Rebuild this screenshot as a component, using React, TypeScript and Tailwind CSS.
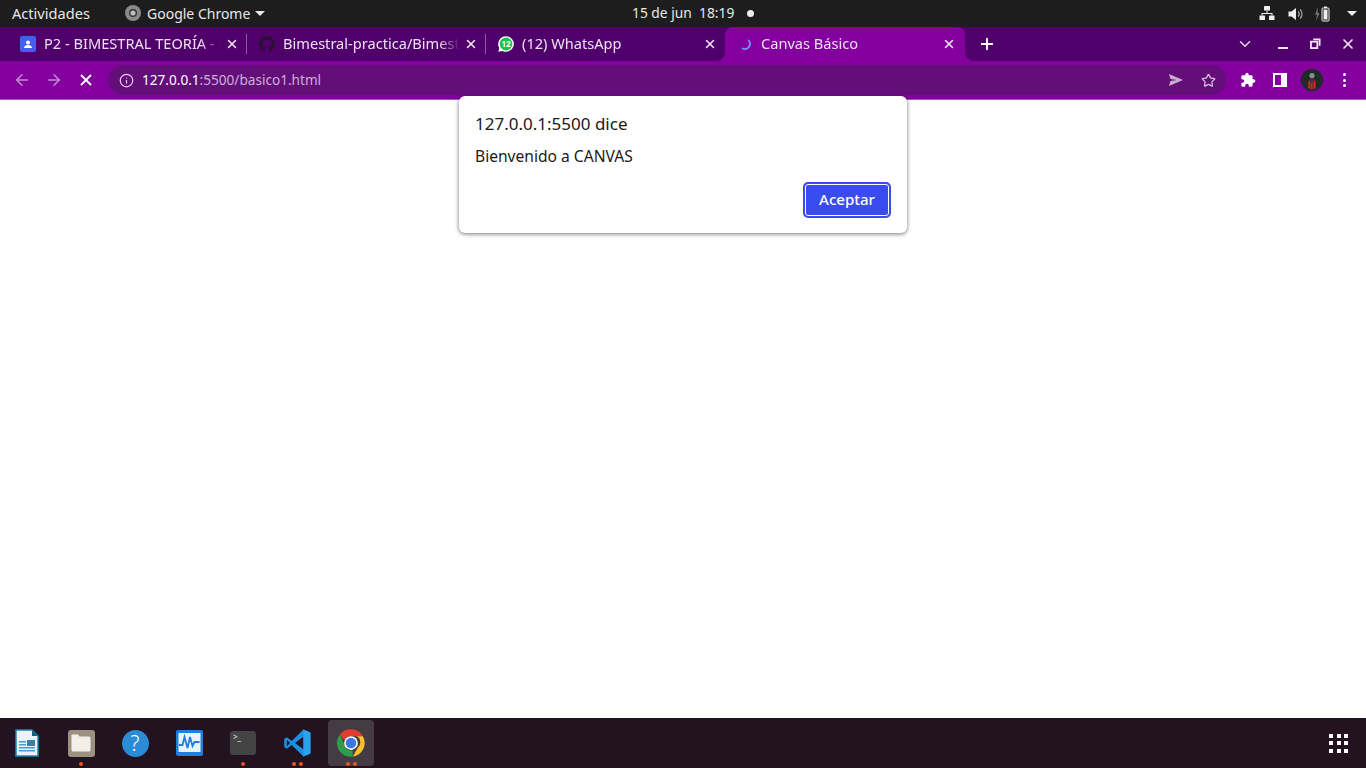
import React from 'react';
import { ArrowLeft, ArrowRight, ChevronDown, Info, Plus, Star, X } from 'lucide-react';
import { FaGithub } from 'react-icons/fa';

const ChromeLogo = ({ size }: { size: number }) => (
  <svg width={size} height={size} viewBox="0 0 48 48">
    <path d="M24 2a22 22 0 0 1 19 11H24a11 11 0 0 0-10.4 7.4L6.2 10.2A22 22 0 0 1 24 2z" fill="#e33b2e" />
    <path d="M43 13a22 22 0 0 1-16.3 32.8L35 31a11 11 0 0 0-1.8-18z" fill="#fbc02d" />
    <path d="M6.2 10.2 15.5 31a11 11 0 0 0 11.2 4.9l-0.2 9.9A22 22 0 0 1 6.2 10.2z" fill="#2e9e48" />
    <circle cx="24" cy="24" r="11" fill="#fff" />
    <circle cx="24" cy="24" r="8.5" fill="#3b78e7" />
  </svg>
);

const TabIcon = ({ kind }: { kind: string }) => {
  if (kind === 'classroom') {
    return (
      <svg width="16" height="16" viewBox="0 0 16 16">
        <rect width="16" height="16" rx="2" fill="#4361ee" />
        <circle cx="8" cy="6.5" r="2" fill="#fff" />
        <path d="M4 12c0-2 2-3 4-3s4 1 4 3z" fill="#fff" />
      </svg>
    );
  }
  if (kind === 'github') return <FaGithub size={16} color="#2a1030" />;
  if (kind === 'whatsapp') {
    return (
      <svg width="16" height="16" viewBox="0 0 16 16">
        <path d="M8 0.2a7.8 7.8 0 1 1-3.6 14.7L0.3 15.8l1-3.8A7.8 7.8 0 0 1 8 0.2z" fill="#fff" />
        <circle cx="8" cy="8" r="6.4" fill="#18c44f" />
        <text x="8" y="10.8" textAnchor="middle" fontSize="8" fontWeight="700" fill="#fff" fontFamily="'Noto Sans', sans-serif">12</text>
      </svg>
    );
  }
  return (
    <svg width="16" height="16" viewBox="0 0 16 16" fill="none">
      <path d="M11.8 4.5a5.2 5.2 0 0 1-6.2 8" stroke="#7c8cf5" strokeWidth="1.8" strokeLinecap="round" />
    </svg>
  );
};

const Tab = ({ title, icon, active, divider }: { title: string; icon: string; active?: boolean; divider?: boolean }) => (
  <div
    className={`relative flex h-[34px] shrink-0 items-center pl-[12px] ${
      active ? 'w-[240px] rounded-t-[8px] bg-[#83009f] pr-[9px]' : 'w-[239px] pr-[8px]'
    }`}
  >
    <TabIcon kind={icon} />
    <span className="ml-[8px] mb-[1px] min-w-0 flex-1 overflow-hidden whitespace-nowrap text-[14.6px] text-[#f0e2f4] [mask-image:linear-gradient(to_right,#000_88%,transparent)]">
      {title}
    </span>
    <X size={14} strokeWidth={2.6} className="ml-[4px] shrink-0 text-[#f2e6f5]" />
    {divider && <div className="absolute right-0 top-[7px] h-[20px] w-px bg-[#8f5a9f]" />}
    {active && (
      <>
        <div className="absolute bottom-0 left-[-8px] h-[8px] w-[8px] bg-[radial-gradient(circle_at_0_0,#50006a_7.5px,#83009f_8px)]" />
        <div className="absolute bottom-0 right-[-8px] h-[8px] w-[8px] bg-[radial-gradient(circle_at_100%_0,#50006a_7.5px,#83009f_8px)]" />
      </>
    )}
  </div>
);

const DockItem = ({ dots = 0, active, children }: { dots?: number; active?: boolean; children: React.ReactNode }) => (
  <div className="relative flex h-[50px] w-[54px] items-center justify-center">
    <div className={`flex h-[46px] w-[46px] items-center justify-center rounded-[4px] ${active ? 'bg-[#453c43]' : ''}`}>
      {children}
    </div>
    {dots > 0 && (
      <div className="absolute bottom-[2px] flex gap-[3px]">
        {Array.from({ length: dots }).map((_, i) => (
          <span key={i} className="h-[4px] w-[4px] rounded-full bg-[#e95420]" />
        ))}
      </div>
    )}
  </div>
);

export default function App() {
  return (
    <div className="flex h-[768px] w-[1366px] flex-col overflow-hidden bg-white font-['Noto_Sans',sans-serif]">
      {/* gnome top bar */}
      <div className="flex h-[27px] shrink-0 items-center bg-[#1d1d1d] text-[14px] text-[#e8e8e8]">
        <div className="flex w-[632px] items-center pl-[12px]">
          <span className="w-[113px] text-[14.6px]">Actividades</span>
          <svg width="16" height="16" viewBox="0 0 16 16">
            <circle cx="8" cy="8" r="8" fill="#8a8a8a" />
            <circle cx="8" cy="8" r="4" fill="#333" />
            <circle cx="8" cy="8" r="2.6" fill="#bdbdbd" />
          </svg>
          <span className="ml-[6px]">Google Chrome</span>
          <span className="ml-[5px] h-0 w-0 border-x-[5px] border-t-[5px] border-x-transparent border-t-[#e8e8e8]" />
        </div>
        <span className="text-[13.8px]">15 de jun&nbsp;&nbsp;18:19</span>
        <span className="ml-[13px] h-[7px] w-[7px] rounded-full bg-[#eee]" />
        <div className="ml-auto flex items-center pr-[9px]">
          <svg width="16" height="15" viewBox="0 0 16 15" fill="#eee">
            <rect x="5" y="0" width="6" height="4.5" rx="0.5" />
            <rect x="0.5" y="9.5" width="5.5" height="4.5" rx="0.5" />
            <rect x="10" y="9.5" width="5.5" height="4.5" rx="0.5" />
            <path d="M7.5 4.5h1V7H13.5v2.5h-1V8h-9v1.5h-1V7h5z" />
          </svg>
          <svg width="16" height="14" viewBox="0 0 16 14" className="ml-[13px]" fill="none">
            <path d="M0.5 4.5h3L8 1v12L3.5 9.5h-3z" fill="#eee" />
            <path d="M10 4.5a3.2 3.2 0 0 1 0 5M12 2.5a6 6 0 0 1 0 9" stroke="#aaa" strokeWidth="1.2" />
          </svg>
          <svg width="20" height="16" viewBox="0 0 20 16" className="ml-[10px]" fill="none">
            <path d="M4 1 1 8.5h2L2 15l3.5-8h-2z" fill="#777" />
            <rect x="8" y="2" width="7" height="13" rx="1" stroke="#eee" strokeWidth="1" />
            <rect x="9.5" y="3.5" width="4" height="10" fill="#eee" />
            <rect x="10" y="0.5" width="3" height="1.5" fill="#eee" />
          </svg>
          <span className="ml-[13px] h-0 w-0 border-x-[5px] border-t-[5px] border-x-transparent border-t-[#eee]" />
        </div>
      </div>

      {/* tab strip */}
      <div className="flex h-[34px] shrink-0 items-center bg-[#50006a] pl-[8px] text-[#f2e6f5]">
        <Tab title="P2 - BIMESTRAL TEORÍA - Parte" icon="classroom" divider />
        <Tab title="Bimestral-practica/Bimestral" icon="github" divider />
        <Tab title="(12) WhatsApp" icon="whatsapp" />
        <Tab title="Canvas Básico" icon="spinner" active />
        <Plus size={18} strokeWidth={2.5} className="ml-[13px] text-white" />
        <ChevronDown size={18} strokeWidth={2} className="ml-[240px] text-[#e6d5ea]" />
        <div className="ml-[24px] mt-[8px] h-[2px] w-[10px] bg-[#f0e4f3]" />
        <svg width="11" height="11" viewBox="0 0 12 12" className="ml-[22px] mb-[2px]" fill="none">
          <path d="M3.5 1.5h7v7" stroke="#f0e4f3" strokeWidth="2" />
          <rect x="1" y="4" width="7" height="7" stroke="#f0e4f3" strokeWidth="2" />
        </svg>
        <X size={16} strokeWidth={2.6} className="ml-[19px] text-[#f0e4f3]" />
      </div>

      {/* toolbar */}
      <div className="flex h-[39px] shrink-0 items-center border-b border-[#a94dbd] bg-[#83009f] text-white">
        <div className="flex w-[108px] items-center pl-[13px]">
          <ArrowLeft size={18} className="text-[#c48ed2]" />
          <ArrowRight size={18} className="ml-[14px] text-[#c48ed2]" />
          <X size={18} strokeWidth={2.4} className="ml-[14px] text-white" />
        </div>
        <div className="flex h-[30px] w-[1118px] items-center rounded-full bg-[#640e7a] pl-[11px] pr-[10px] text-[13.6px]">
          <Info size={15} className="text-[#e3cfe8]" />
          <span className="ml-[8px] text-white">127.0.0.1</span>
          <span className="text-[#cdb0d6]">:5500/basico1.html</span>
          <svg width="16" height="14" viewBox="0 0 16 14" className="ml-auto" fill="#c9aed1">
            <path d="M1 1l14 6-14 6 1.5-5L9 7 2.5 6z" />
          </svg>
          <Star size={15} strokeWidth={2} className="ml-[17px] text-[#d8c3de]" />
        </div>
        <svg width="16" height="16" viewBox="0 0 24 24" className="ml-[14px]" fill="#fff">
          <path d="M20.5 11H19V7c0-1.1-.9-2-2-2h-4V3.5C13 2.12 11.88 1 10.5 1S8 2.12 8 3.5V5H4c-1.1 0-1.99.9-1.99 2v3.8H3.5c1.49 0 2.7 1.21 2.7 2.7s-1.21 2.7-2.7 2.7H2V20c0 1.1.9 2 2 2h3.8v-1.5c0-1.49 1.21-2.7 2.7-2.7 1.49 0 2.7 1.21 2.7 2.7V22H17c1.1 0 2-.9 2-2v-4h1.5c1.38 0 2.5-1.12 2.5-2.5S21.88 11 20.5 11z" />
        </svg>
        <svg width="14" height="14" viewBox="0 0 14 14" className="ml-[17px]">
          <path d="M0 0h14v14H0z" fill="#fff" />
          <path d="M2 2h6v10H2z" fill="#83009f" />
        </svg>
        <svg width="22" height="22" viewBox="0 0 22 22" className="ml-[14px]">
          <circle cx="11" cy="11" r="11" fill="#1c2c24" />
          <circle cx="11" cy="6.5" r="2.6" fill="#8a8f96" />
          <path d="M7 20v-7c0-2 2-3.5 4-3.5s4 1.5 4 3.5v7z" fill="#4a3236" />
          <path d="M7.5 12.5h1.4v7H7.5zM10.2 14h1.200v6.500h-1.200zM12.8 12.5h1.400v7h-1.400z" fill="#e02b1f" />
        </svg>
        <div className="ml-[20px] flex flex-col gap-[2.5px]">
          <span className="h-[3px] w-[3px] rounded-full bg-white" />
          <span className="h-[3px] w-[3px] rounded-full bg-white" />
          <span className="h-[3px] w-[3px] rounded-full bg-white" />
        </div>
      </div>

      {/* page area, alert hangs over the toolbar edge */}
      <div className="relative flex-1 bg-white">
        <div className="absolute left-[459px] top-[-4px] flex h-[137px] w-[448px] flex-col rounded-[6px] bg-white px-[16px] pt-[17px] text-[#1a1a1a] shadow-[0_1px_4px_rgba(0,0,0,0.55)]">
          <div className="text-[17px] leading-[22px]">127.0.0.1:5500 dice</div>
          <div className="mt-[11px] text-[15.6px] leading-[20px]">Bienvenido a CANVAS</div>
          <button className="ml-auto mt-[16px] flex h-[36px] w-[88px] items-center justify-center rounded-[5px] border-2 border-[#3b4cee] bg-[#3b4cee] pb-[1px] text-[15px] font-medium text-white ring-1 ring-inset ring-white">
            Aceptar
          </button>
        </div>
      </div>

      {/* dock */}
      <div className="flex h-[50px] shrink-0 items-center bg-[#23121f]">
        <DockItem>
          <svg width="24" height="28" viewBox="0 0 24 28">
            <path d="M1 1h16l6 6v20H1z" fill="#eaf3f8" stroke="#1a8ab5" strokeWidth="1.5" />
            <path d="M17 1l6 6h-6z" fill="#0f5f80" />
            <path d="M4 12h7v1.5H4zM4 15h7v1.5H4zM4 18h16v1.5H4zM4 21h16v1.5H4z" fill="#4a9bd4" />
            <rect x="12" y="11" width="8" height="6" fill="#3c7ea3" />
          </svg>
        </DockItem>
        <DockItem dots={1}>
          <div className="flex h-[27px] w-[27px] items-center justify-center rounded-[3px] bg-[#9c9282]">
            <svg width="20" height="18" viewBox="0 0 20 18">
              <path d="M1 0.5h6l1.500 2H18a1.500 1.500 0 0 1 1.500 1.500v12a1.500 1.500 0 0 1-1.500 1.500H2A1.500 1.500 0 0 1 0.500 16V1z" fill="#f3efe8" />
            </svg>
          </div>
        </DockItem>
        <DockItem>
          <div className="flex h-[27px] w-[27px] items-center justify-center rounded-full bg-[#2a8bd8] text-[21px] font-light leading-none text-white">?</div>
        </DockItem>
        <DockItem>
          <svg width="27" height="26" viewBox="0 0 27 26">
            <rect width="27" height="26" rx="2" fill="#1e7fe0" />
            <rect x="2.5" y="3" width="22" height="19" fill="#e7f2fb" />
            <path d="M3 15h3.5l2-8 3 11 2.5-11 2.500 9 2-4h5" fill="none" stroke="#1e7fe0" strokeWidth="1.8" />
          </svg>
        </DockItem>
        <DockItem dots={1}>
          <div className="h-[24px] w-[26px] rounded-[3px] bg-[#444] pl-[3px] text-[8px] leading-[12px] text-[#eee]">&gt;_</div>
        </DockItem>
        <DockItem dots={2}>
          <svg width="28" height="28" viewBox="0 0 24 24">
            <path d="M17.5 0.5 23.5 3v18l-6 2.5-10-9.7-4.2 3.2L1 15.5V8.5l2.3-1.5 4.2 3.2z" fill="#1a8fe0" />
            <path d="M17.5 6.6 10.3 12l7.2 5.4z" fill="#23121f" />
            <path d="M3.3 9.3 6 12l-2.7 2.7z" fill="#23121f" />
            <path d="M17.5 0.5 23.5 3v18l-6 2.5z" fill="#2aa3ee" />
          </svg>
        </DockItem>
        <DockItem dots={2} active>
          <ChromeLogo size={30} />
        </DockItem>
        <div className="ml-auto mr-[18px] grid grid-cols-3 gap-[3.5px]">
          {Array.from({ length: 9 }).map((_, i) => (
            <span key={i} className="h-[4px] w-[4px] bg-white" />
          ))}
        </div>
      </div>
    </div>
  );
}
